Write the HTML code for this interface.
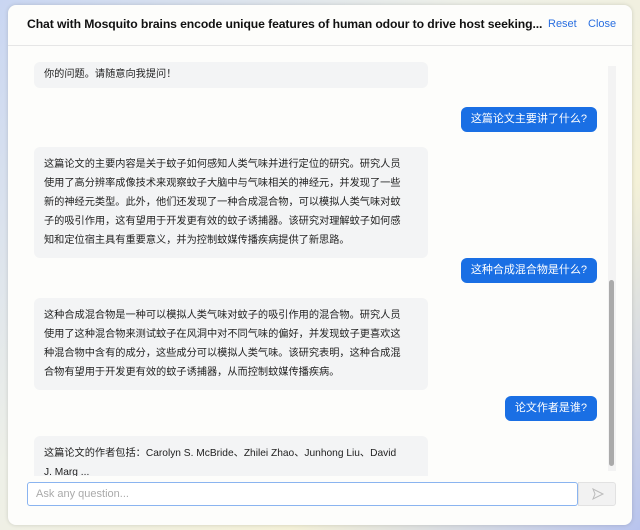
<!DOCTYPE html>
<html><head><meta charset="utf-8"><style>
body{margin:0;width:640px;height:530px;overflow:hidden;background:linear-gradient(135deg,#c9d6f2 0%,#eef0e8 40%,#f4f1d8 70%,#b8c4ee 100%);font-family:"Liberation Sans","Noto Sans CJK SC",sans-serif;}
.modal{position:absolute;left:8px;top:5px;width:624px;height:520px;background:#fdfdfb;border-radius:8px;box-shadow:0 0 4px rgba(0,0,0,.15);overflow:hidden}
.hdr{height:40px;border-bottom:1px solid #e6e6e6;position:relative}
.title{position:absolute;left:19px;top:12px;font-size:12.2px;font-weight:bold;color:#111;white-space:nowrap;letter-spacing:-0.1px}
.lnk{position:absolute;top:13px;font-size:11px;color:#2a6fe0}
.chat{position:absolute;left:0;top:41px;width:624px;height:430px;overflow:hidden}
.a{position:absolute;left:26px;width:362px;background:#f3f4f5;border-radius:6px;padding:8px 22px 8px 10px;font-size:10.2px;line-height:19px;color:#222}
.u{position:absolute;right:35px;background:#1a6fe4;color:#fff;border-radius:6px;padding:0 10px;height:25px;line-height:25px;font-size:11px}
.sb{position:absolute;left:600px;top:20px;width:8px;height:405px;background:#f3f3f3}
.th{position:absolute;left:601px;top:234px;width:5px;height:186px;background:#aaa;border-radius:3px}
.inp{position:absolute;left:19px;top:477px;width:551px;height:24px;border:1px solid #8ab4f0;border-radius:3px;background:#fff;font-size:11px;color:#aaa;line-height:22px;padding-left:8px;box-sizing:border-box}
.send{position:absolute;left:570px;top:477px;width:38px;height:24px;background:#f2f2f2;border:1px solid #e2e2e2;border-radius:0 3px 3px 0;box-sizing:border-box}
</style></head><body>
<div class="modal">
<div class="hdr"><div class="title">Chat with Mosquito brains encode unique features of human odour to drive host seeking...</div>
<div class="lnk" style="left:540px">Reset</div><div class="lnk" style="left:580px">Close</div></div>
<div class="chat">
<div class="a" style="top:16px;height:26px;padding:0 22px 0 10px;line-height:26px">你的问题。请随意向我提问！</div>
<div class="u" style="top:61px">这篇论文主要讲了什么?</div>
<div class="a" style="top:101px">这篇论文的主要内容是关于蚊子如何感知人类气味并进行定位的研究。研究人员使用了高分辨率成像技术来观察蚊子大脑中与气味相关的神经元，并发现了一些新的神经元类型。此外，他们还发现了一种合成混合物，可以模拟人类气味对蚊子的吸引作用，这有望用于开发更有效的蚊子诱捕器。该研究对理解蚊子如何感知和定位宿主具有重要意义，并为控制蚊媒传播疾病提供了新思路。</div>
<div class="u" style="top:212px">这种合成混合物是什么?</div>
<div class="a" style="top:252px">这种合成混合物是一种可以模拟人类气味对蚊子的吸引作用的混合物。研究人员使用了这种混合物来测试蚊子在风洞中对不同气味的偏好，并发现蚊子更喜欢这种混合物中含有的成分，这些成分可以模拟人类气味。该研究表明，这种合成混合物有望用于开发更有效的蚊子诱捕器，从而控制蚊媒传播疾病。</div>
<div class="u" style="top:350px">论文作者是谁?</div>
<div class="a" style="top:390px">这篇论文的作者包括：Carolyn S. McBride、Zhilei Zhao、Junhong Liu、David J. Marg ...</div>
<div class="sb"></div><div class="th"></div>
</div>
<div class="inp">Ask any question...</div>
<div class="send"><svg width="36" height="22" viewBox="0 0 36 22"><path d="M14 6 L24 11 L14 16 L16 11 Z" fill="none" stroke="#bbb" stroke-width="1"/></svg></div>
</div>
</body></html>
